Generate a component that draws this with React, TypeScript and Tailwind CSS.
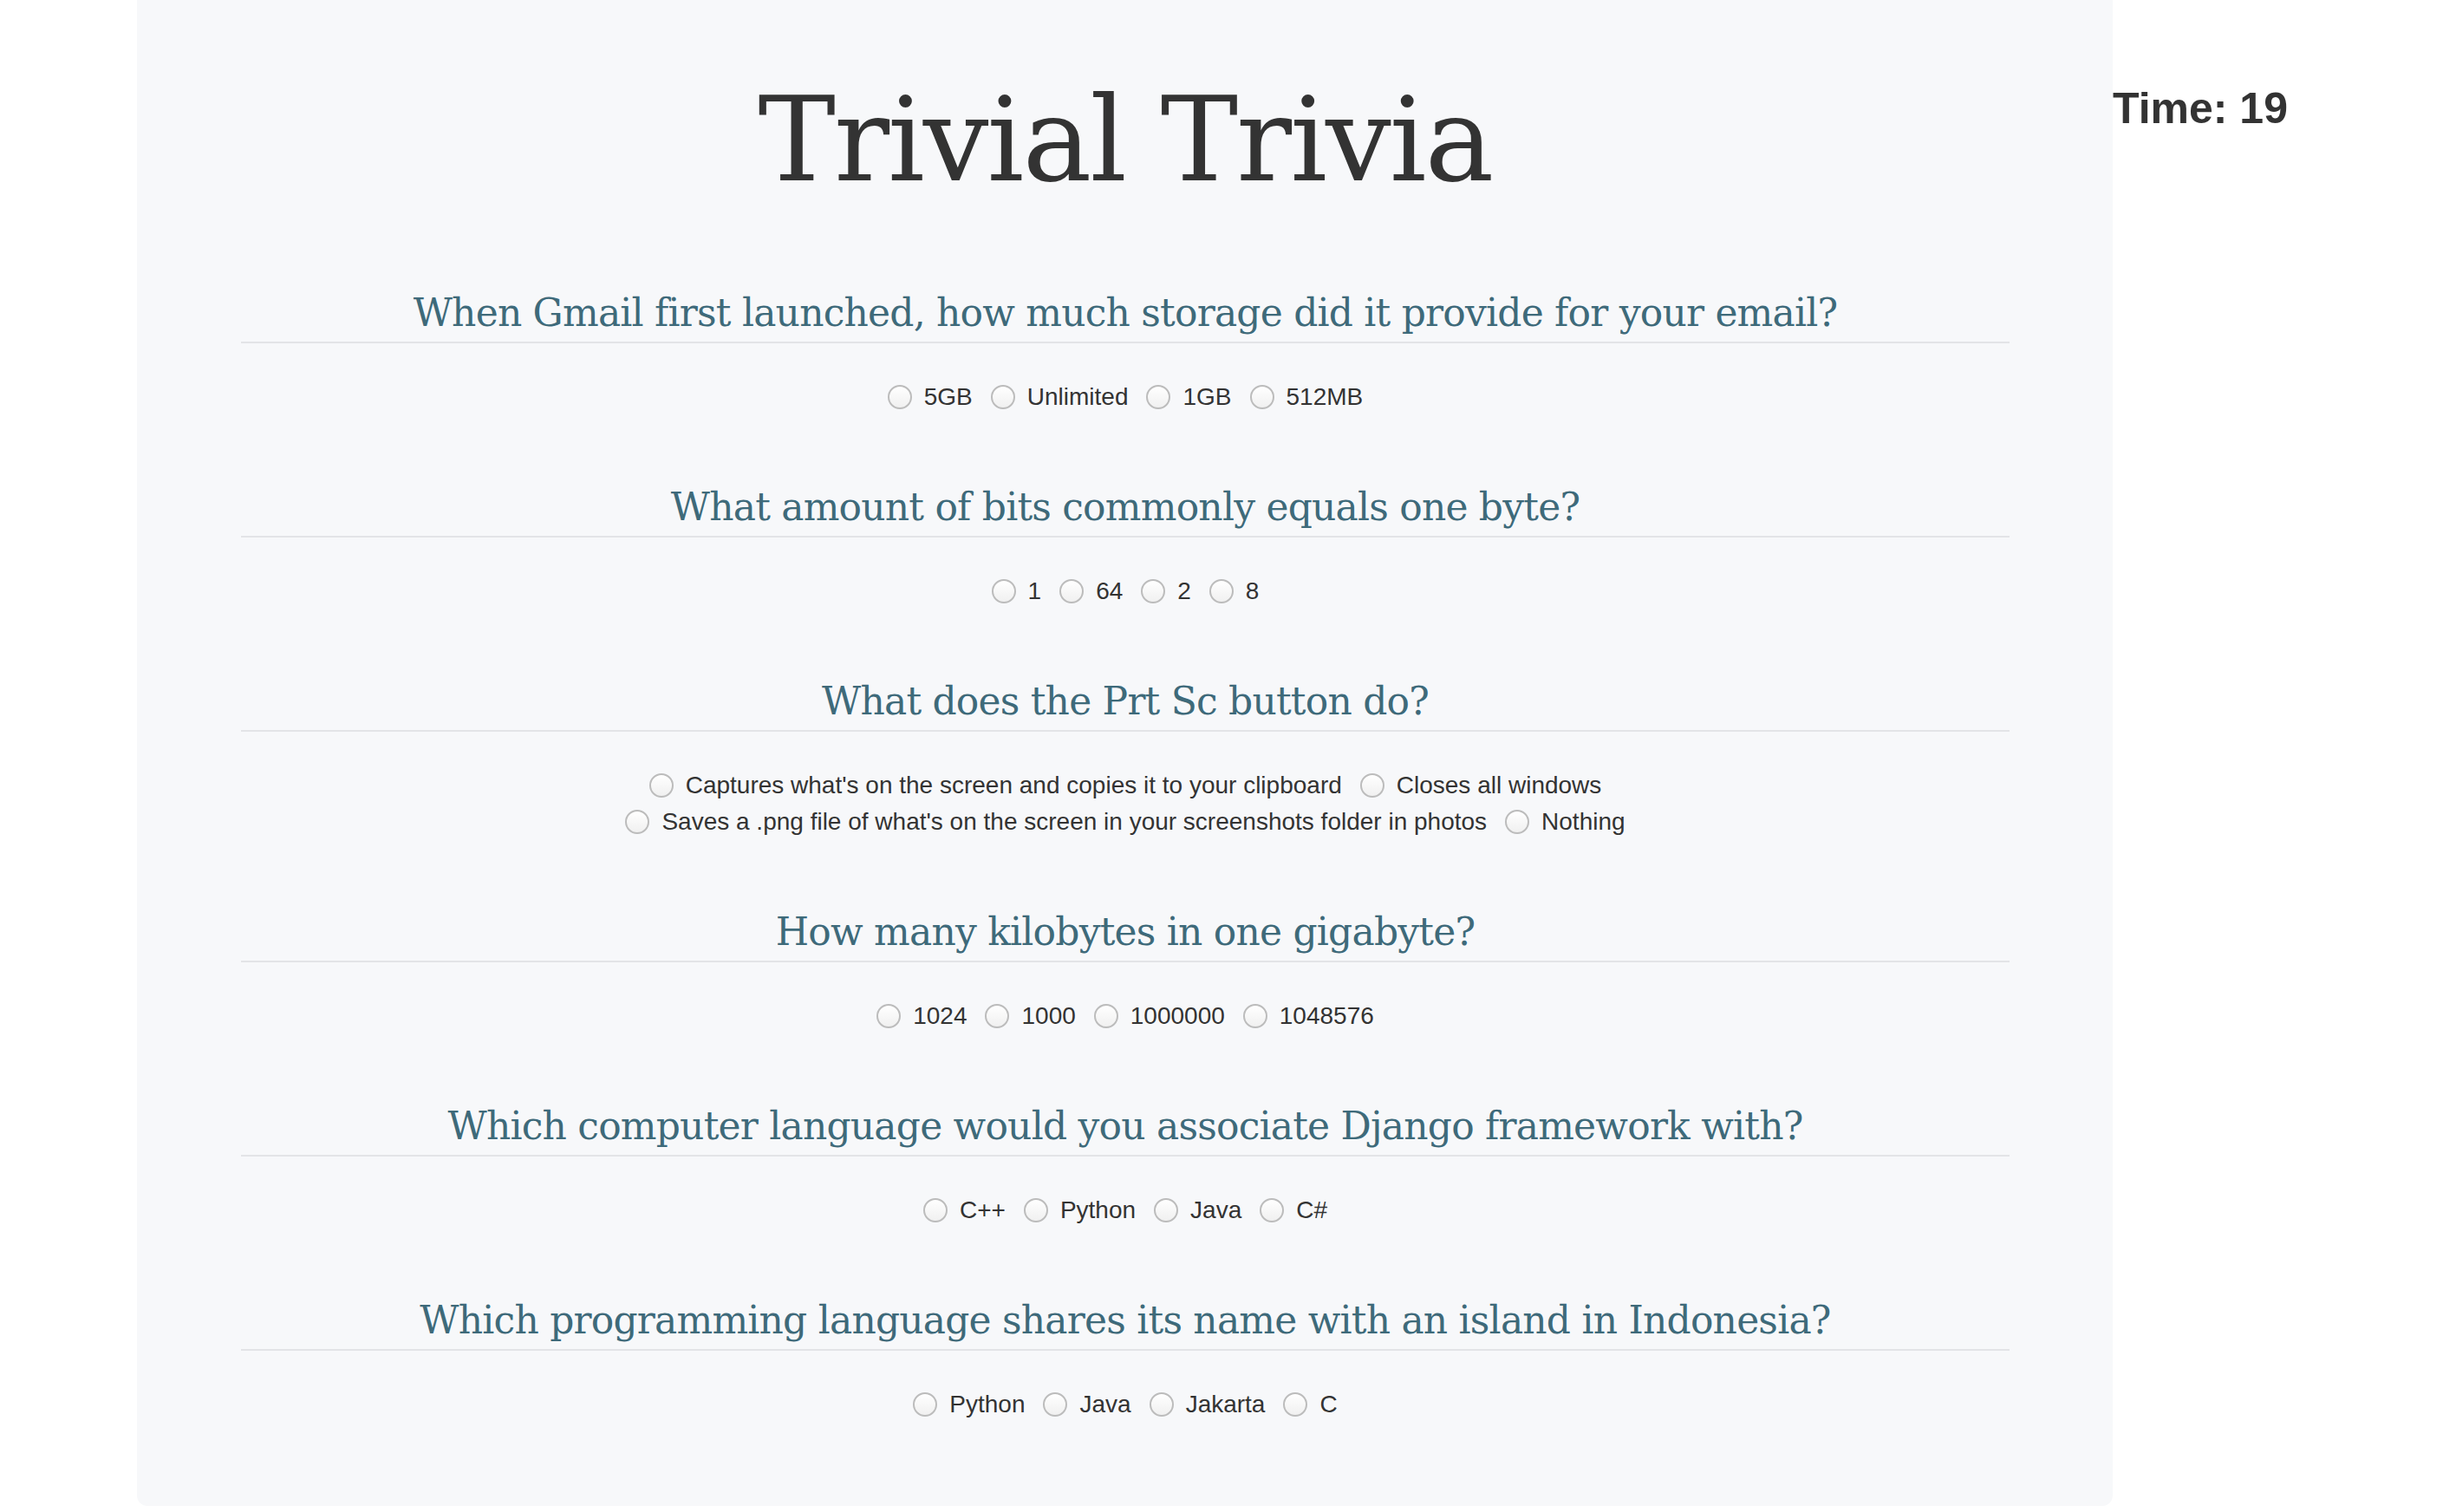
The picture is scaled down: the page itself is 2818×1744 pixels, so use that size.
const questions = [
  {
    question: "When Gmail first launched, how much storage did it provide for your email?",
    answers: ["5GB", "Unlimited", "1GB", "512MB"],
  },
  {
    question: "What amount of bits commonly equals one byte?",
    answers: ["1", "64", "2", "8"],
  },
  {
    question: "What does the Prt Sc button do?",
    answers: [
      "Captures what's on the screen and copies it to your clipboard",
      "Closes all windows",
      "Saves a .png file of what's on the screen in your screenshots folder in photos",
      "Nothing",
    ],
  },
  {
    question: "How many kilobytes in one gigabyte?",
    answers: ["1024", "1000", "1000000", "1048576"],
  },
  {
    question: "Which computer language would you associate Django framework with?",
    answers: ["C++", "Python", "Java", "C#"],
  },
  {
    question: "Which programming language shares its name with an island in Indonesia?",
    answers: ["Python", "Java", "Jakarta", "C"],
  },
];

const Radio = () => (
  <span className="block w-[28px] h-[28px] shrink-0 rounded-full border-2 border-[#bcbcbc] bg-linear-to-b from-white to-[#f0f0f0]" />
);

const App = () => {
  return (
    <div className="min-h-screen bg-white flex items-start font-['Liberation_Sans',Arial,sans-serif] text-[#333]">
      {/* Quiz panel */}
      <div className="ml-[158px] w-[2279px] bg-[#f7f8fa] rounded-b-[12px] pt-[87px] pb-[96px] pl-[120px] pr-[119px]">
        <h1 className="text-center text-[134px] leading-[150px] tracking-[-2px] text-[#333] font-['DejaVu_Serif',Georgia,serif]">
          Trivial Trivia
        </h1>

        <div className="mt-[100px] flex flex-col gap-[82px]">
          {questions.map((item, index) => (
            <div key={index}>
              <h2 className="text-center text-[44px] leading-[48px] tracking-[-0.8px] pb-[9px] border-b-2 border-[#e3e4e7] text-[#3e6a7a] font-['DejaVu_Serif',Georgia,serif]">
                {item.question}
              </h2>
              <div className="mt-[41px] flex flex-wrap justify-center gap-x-[21px]">
                {item.answers.map((answer, i) => (
                  <label key={i} className="flex items-center h-[42px] text-[28px] leading-[42px]">
                    <Radio />
                    <span className="ml-[14px] whitespace-nowrap">{answer}</span>
                  </label>
                ))}
              </div>
            </div>
          ))}
        </div>
      </div>

      {/* Timer */}
      <div className="mt-[100px] text-[50px] leading-none font-bold text-[#333]">Time: 19</div>
    </div>
  );
};

export default App;
